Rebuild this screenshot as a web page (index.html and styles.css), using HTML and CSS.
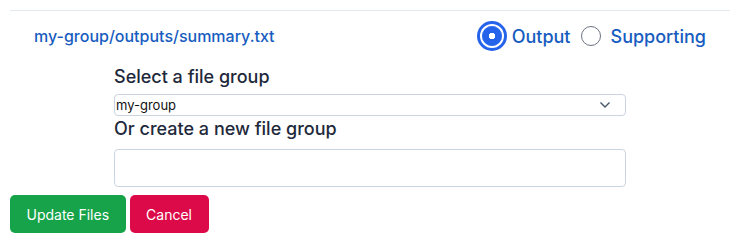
FILE: index.html
```html
<!DOCTYPE html>
<html lang="en">
<head>
    <meta charset="UTF-8">
    <meta name="viewport" content="width=device-width, initial-scale=1.0">
    <title>Move File</title>
    <link rel="stylesheet" href="styles.css">
</head>
<body>
    <div class="file-row">
        <a class="file-link" href="#">my-group/outputs/summary.txt</a>
        <div class="file-kind">
            <label class="kind-option">
                <input type="radio" name="kind" value="output" class="kind-radio checked" checked>
                <span>Output</span>
            </label>
            <label class="kind-option">
                <input type="radio" name="kind" value="supporting" class="kind-radio">
                <span>Supporting</span>
            </label>
        </div>
    </div>

    <form class="group-form" id="groupForm">
        <label class="field-label" for="fileGroup">Select a file group</label>
        <select id="fileGroup" name="fileGroup" class="group-select">
            <option>my-group</option>
        </select>
        <label class="field-label" for="newGroup">Or create a new file group</label>
        <input type="text" id="newGroup" name="newGroup" class="group-input">
    </form>

    <div class="actions">
        <button type="button" class="btn btn-update">Update Files</button>
        <button type="button" class="btn btn-cancel">Cancel</button>
    </div>
</body>
</html>
```

FILE: styles.css
```css
body {
    font-family: "Inter", "Liberation Sans", sans-serif;
    background-color: #fff;
    color: #1e293b;
    margin: 0;
    padding: 10px;
}
.file-row {
    display: flex;
    justify-content: space-between;
    align-items: center;
    border-top: 1px solid #e2e8f0;
    padding: 7px 24px 0 24px;
    height: 36px;
}
.file-link {
    color: #175cc0;
    font-size: 16px;
    font-weight: 500;
    text-decoration: none;
}
.file-kind {
    display: flex;
    align-items: center;
    gap: 10px;
}
.kind-option {
    display: flex;
    align-items: center;
    gap: 10px;
    color: #175cc0;
    font-size: 18px;
    font-weight: 500;
}
.kind-radio {
    appearance: none;
    width: 20px;
    height: 20px;
    margin: 0;
    border: 1px solid #6b7280;
    border-radius: 50%;
    background-color: #fff;
}
.kind-radio.checked {
    border-color: #2563eb;
    background: radial-gradient(circle, #fff 0 3px, #2563eb 3.5px);
    box-shadow: 0 0 0 2px #fff, 0 0 0 5px #2563eb;
}
.group-form {
    width: 512px;
    margin: 10px auto 0 auto;
    display: flex;
    flex-direction: column;
}
.field-label {
    font-size: 18px;
    font-weight: 500;
    line-height: 26px;
    margin-bottom: 4px;
}
.group-select {
    appearance: none;
    font-family: "Inter", "Liberation Sans", sans-serif;
    font-size: 13px;
    color: #111;
    height: 22px;
    padding: 0 0 0 1px;
    border: 1px solid #cbd5e1;
    border-radius: 4px;
    background: #fff url("data:image/svg+xml,%3Csvg xmlns='http://www.w3.org/2000/svg' width='12' height='8' viewBox='0 0 12 8'%3E%3Cpath d='M1.5 1.5l4.5 4.5 4.5-4.5' fill='none' stroke='%23475569' stroke-width='1.4'/%3E%3C/svg%3E") no-repeat right 14px center;
}
.group-input {
    height: 38px;
    box-sizing: border-box;
    border: 1px solid #cbd5e1;
    border-radius: 4px;
    padding: 6px 10px;
    font-size: 16px;
    margin-top: 3px;
}
.actions {
    display: flex;
    gap: 4px;
    margin-top: 8px;
}
.btn {
    font-family: "Inter", "Liberation Sans", sans-serif;
    font-size: 14px;
    color: #fff;
    border: none;
    border-radius: 5px;
    height: 38px;
    padding: 0 16.5px;
    cursor: pointer;
}
.btn-update {
    background-color: #16a34a;
}
.btn-cancel {
    background-color: #dc0a48;
}
```
